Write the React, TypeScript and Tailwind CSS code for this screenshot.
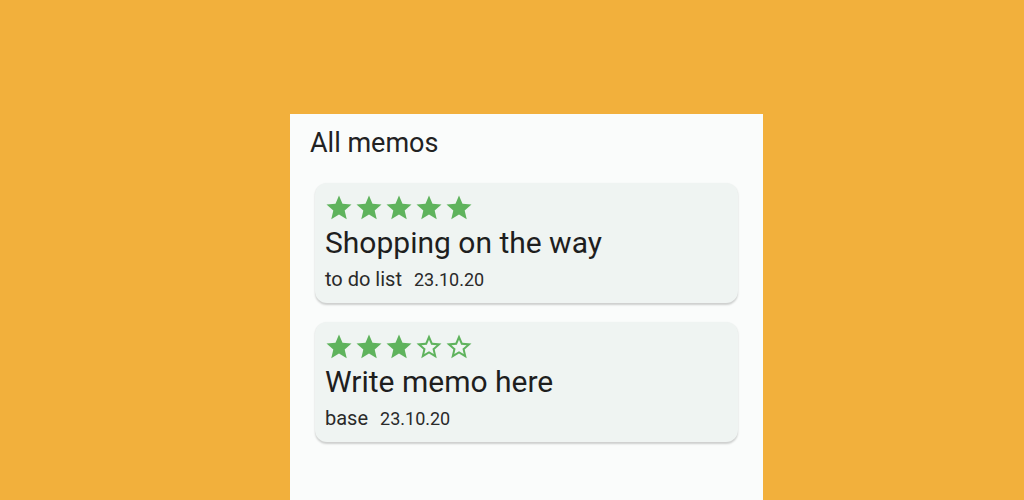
import React from "react";

const FULL = "M12 17.27L18.18 21l-1.64-7.03L22 9.24l-7.19-.61L12 2 9.19 8.63 2 9.24l5.46 4.73L5.82 21z";
const BORDER = "M22 9.24l-7.19-.62L12 2 9.19 8.63 2 9.24l5.46 4.73L5.82 21 12 17.27 18.18 21l-1.63-7.03L22 9.24zM12 15.4l-3.76 2.27 1-4.28-3.32-2.88 4.38-.38L12 6.1l1.71 4.04 4.38.38-3.32 2.88 1 4.28L12 15.4z";

function Stars({ n }: { n: number }) {
  return (
    <div className="flex h-[30px] -ml-[1px]">
      {[0, 1, 2, 3, 4].map((i) => (
        <svg key={i} viewBox="0 0 24 24" className="w-[30px] h-[30px]" fill="#5fb35d">
          <path d={i < n ? FULL : BORDER} />
        </svg>
      ))}
    </div>
  );
}

function Card({ n, title, tag, date }: { n: number; title: string; tag: string; date: string }) {
  return (
    <div className="bg-[#eff4f2] rounded-[12px] h-[120px] pl-[10px] pt-[10px] shadow-[0_1.5px_2px_rgba(0,0,0,0.18)]">
      <Stars n={n} />
      <div className="text-[30px] leading-[36px] text-[#1e1e1e] mt-[2px]">{title}</div>
      <div className="flex items-baseline gap-[12px] mt-[6px] leading-[24px] text-[#2a2a2a]">
        <span className="text-[20px]">{tag}</span>
        <span className="text-[18px]">{date}</span>
      </div>
    </div>
  );
}

export default function App() {
  return (
    <div className="w-[1024px] h-[500px] bg-[#f2b03c] flex overflow-hidden" style={{ fontFamily: "Roboto, sans-serif" }}>
      <div className="w-[473px] h-[386px] mt-[114px] ml-[290px] bg-[#fafcfb] flex flex-col">
        <div className="text-[27px] leading-[32px] text-[#222] pl-[20px] pt-[13px]">All memos</div>
        <div className="flex flex-col gap-[19px] px-[25px] pt-[24px]">
          <Card n={5} title="Shopping on the way" tag="to do list" date="23.10.20" />
          <Card n={3} title="Write memo here" tag="base" date="23.10.20" />
        </div>
      </div>
    </div>
  );
}
